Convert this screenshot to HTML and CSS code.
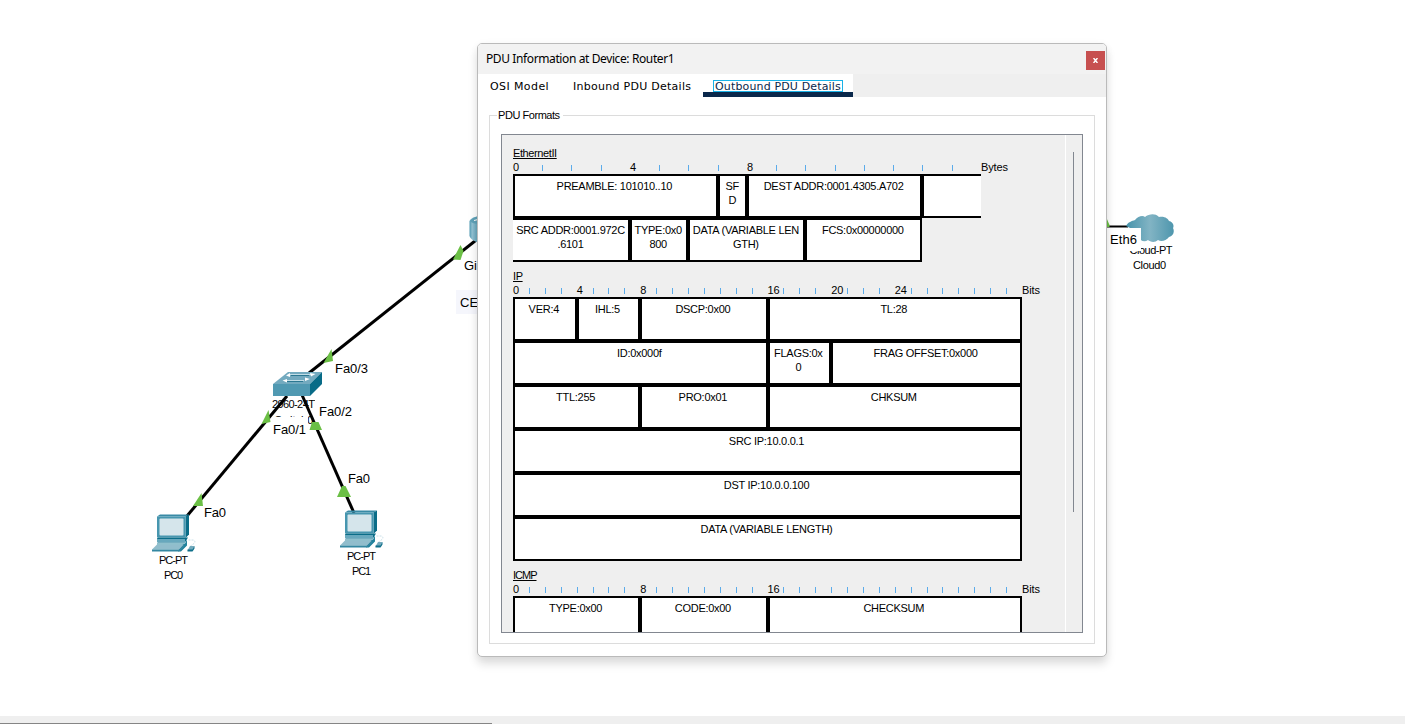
FILE: index.html
```html
<!DOCTYPE html>
<html lang="en">
<head>
<meta charset="utf-8">
<title>PDU Information at Device: Router1</title>
<link rel="stylesheet" href="styles.css">
</head>
<body>
<svg class="topology" width="1405" height="716" viewBox="0 0 1405 716">
  <defs>
    <linearGradient id="cloudFill" x1="0" x2="1" y1="0" y2="0">
      <stop offset="0" stop-color="#4793ab"/><stop offset=".5" stop-color="#82b4c4"/><stop offset="1" stop-color="#4e96ad"/>
    </linearGradient>
    <linearGradient id="routerFill" x1="0" x2="1" y1="0" y2="0">
      <stop offset="0" stop-color="#4d98b1"/><stop offset=".25" stop-color="#94c3d4"/><stop offset="1" stop-color="#4d98b1"/>
    </linearGradient>
    <g id="pc">
      <path fill="#398aa5" d="M0 2 3 0H32L28.500 2Z"/>
      <path fill="#0b6d88" d="M28.500 2 32 0V20L28.500 23.500Z"/>
      <rect fill="#4796af" y="2" width="28.500" height="21"/>
      <rect fill="#d5e5eb" x="2.500" y="4" width="24" height="17" rx="1"/>
      <path fill="#0b6d88" d="M0 24 1 23H31L28 28H1Z"/>
      <rect fill="#67a8bd" y="24.500" width="28" height="3.500"/>
      <path fill="#21829c" d="M0 29H28L30 25V31L24 37H21L26 30H0Z"/>
      <path fill="#91bdcc" d="M0 30H27L21.500 35H-5Z"/>
      <path fill="#3487a1" d="M-5 35H21.500L27 30V32L22 37H-5Z"/>
      <path class="cord" d="M31.500 25.500H36.500Q39 27 37 29L33 32"/>
      <path fill="#73aabd" d="M33 31.500H37.500L36 36H30.500Z"/>
      <path fill="#0f6f8a" d="M30.500 35H35.500L37.500 31.500V34L35.500 37H30.500Z"/>
    </g>
  </defs>

  <g class="labels">
    <text class="device start" x="272" y="408" textLength="49">2960-24TT</text>
    <text class="device" x="294" y="424">Switch0</text>
  </g>
  <path class="mask" d="M315 400H354V420H315Z"/>

  <g class="links">
    <path d="M187 516 287 396"/>
    <path d="M302 395 354 513"/>
    <path d="M309 373 480 237"/>
    <path class="thin" d="M1106 226.500H1128"/>
  </g>
  <path class="mask" d="M273 417H308V438H273Z"/>

  <path fill="url(#routerFill)" d="M469.500 221Q471 217 480 216V243Q471 241 469.500 236Z"/>
  <path fill="#5fa2b8" d="M470 221Q472 217 480 216V224Q472 224 470 221Z"/>
  <path stroke="#fff" d="M474 220.500 478 219.500"/>

  <g class="switch">
    <path fill="#73aabf" d="M288 372H322L310 384H273Z"/>
    <path fill="#5099b2" d="M273 384H310V396H273Z"/>
    <path fill="#086b87" d="M322 372V384L310 396V384Z"/>
    <path stroke="#2c7892" d="M291 375.500H309M286 381.500H303"/>
    <path stroke="#d7eaf0" stroke-width=".8" d="M290 374.500H311M285 380.500H304"/>
    <path fill="#fff" d="M310 373 315.500 374 311 376.500ZM305 377.500 310 379 305 381ZM290 373 286 375.500 290 377ZM287 379 282.500 380.500 287 382.500Z"/>
  </g>

  <use href="#pc" x="157" y="514.500"/>
  <use href="#pc" x="345" y="510.500"/>

  <path fill="url(#cloudFill)" d="M1126 226C1128 222 1132 221 1135 220C1138 216 1143 215 1145 217C1149 214 1155 213 1159 217C1165 216 1168 219 1169 221C1174 222 1174 227 1173 228C1175 232 1173 236 1169 237C1166 241 1161 242 1158 240C1155 243 1150 242 1148 240C1144 243 1140 240 1138 237C1134 236 1132 232 1130 228Z"/>

  <g class="status">
    <path d="M460.500 245 463.500 251 460.500 260 453 259.500Z"/>
    <path d="M331.500 349 333 361 323.500 363Z"/>
    <path d="M268.500 410 270.500 422 261.500 424Z"/>
    <path d="M312 422H318.500L322 430H309.500Z"/>
    <path d="M201.500 493 203 506H193Z"/>
    <path d="M342 486H345.500L351 497H337Z"/>
    <path d="M1104 218H1106.500L1109.500 225V227H1104Z"/>
  </g>

  <g class="labels">
    <text x="335" y="373" textLength="33">Fa0/3</text>
    <text x="319" y="416" textLength="33">Fa0/2</text>
    <text x="273" y="434" textLength="33">Fa0/1</text>
    <text x="204" y="517" textLength="22">Fa0</text>
    <text x="348" y="483" textLength="22">Fa0</text>
    <text x="464" y="270">Gig</text>
    <rect class="note" x="456" y="290" width="24" height="24"/>
    <text x="460" y="307">CE</text>
    <text class="device" x="1151" y="254" textLength="43">Cloud-PT</text>
    <path class="mask" d="M1108 228H1141V251H1108Z"/>
    <text x="1110" y="244" textLength="27">Eth6</text>
    <text class="device" x="1149.500" y="269" textLength="33">Cloud0</text>
    <text class="device" x="173.500" y="564" textLength="29">PC-PT</text>
    <text class="device" x="173.500" y="579" textLength="19">PC0</text>
    <text class="device" x="361.500" y="560" textLength="29">PC-PT</text>
    <text class="device" x="361.500" y="575" textLength="19">PC1</text>
  </g>
</svg>
<div class="statusbar"><div class="statusbar-line"></div></div>

<section class="dialog">
  <header class="titlebar">
    <span class="title">PDU Information at Device: Router1</span>
    <button class="close" aria-label="Close"><svg width="5" height="5" viewBox="0 0 5 5"><path d="M.5 0 4.500 5M4.500 0 .5 5" stroke="#fff" stroke-width="1.500"/></svg></button>
  </header>
  <nav class="tabs">
    <span class="tab tab-osi">OSI Model</span>
    <span class="tab tab-in">Inbound PDU Details</span>
    <span class="tab tab-out"><span class="focus">Outbound PDU Details</span></span>
  </nav>
  <div class="formats">
    <div class="legend">PDU Formats</div>
    <div class="viewport">
      <div class="sheet">
        <h2>EthernetII</h2>
        <div class="scale bytes">
          <b>0</b><i></i><i></i><i></i><b>4</b><i></i><i></i><i></i><b>8</b><i></i><i></i><i></i><i></i><i></i><i></i><i></i><span>Bytes</span>
        </div>
        <div class="packet bytes">
          <div class="s7">PREAMBLE: 101010..10</div><div class="s1">SF<br>D</div><div class="s6">DEST ADDR:0001.4305.A702</div><div class="s2 open-right"></div>
          <div class="s4 open-left">SRC ADDR:0001.972C<br>.6101</div><div class="s2">TYPE:0x0<br>800</div><div class="s4">DATA (VARIABLE LEN<br>GTH)</div><div class="s4">FCS:0x00000000</div>
        </div>

        <h2>IP</h2>
        <div class="scale bits">
          <b>0</b><i></i><i></i><i></i><b>4</b><i></i><i></i><i></i><b>8</b><i></i><i></i><i></i><i></i><i></i><i></i><i></i><b>16</b><i></i><i></i><i></i><b>20</b><i></i><i></i><i></i><b>24</b><i></i><i></i><i></i><i></i><i></i><i></i><i></i><span>Bits</span>
        </div>
        <div class="packet bits">
          <div class="s4">VER:4</div><div class="s4">IHL:5</div><div class="s8">DSCP:0x00</div><div class="s16">TL:28</div>
          <div class="s16">ID:0x000f</div><div class="s4">FLAGS:0x<br>0</div><div class="s12">FRAG OFFSET:0x000</div>
          <div class="s8">TTL:255</div><div class="s8">PRO:0x01</div><div class="s16">CHKSUM</div>
          <div class="s32">SRC IP:10.0.0.1</div>
          <div class="s32">DST IP:10.0.0.100</div>
          <div class="s32">DATA (VARIABLE LENGTH)</div>
        </div>

        <h2 class="narrow">ICMP</h2>
        <div class="scale bits">
          <b>0</b><i></i><i></i><i></i><i></i><i></i><i></i><i></i><b>8</b><i></i><i></i><i></i><i></i><i></i><i></i><i></i><b>16</b><i></i><i></i><i></i><i></i><i></i><i></i><i></i><i></i><i></i><i></i><i></i><i></i><i></i><i></i><i></i><span>Bits</span>
        </div>
        <div class="packet bits">
          <div class="s8">TYPE:0x00</div><div class="s8">CODE:0x00</div><div class="s16">CHECKSUM</div>
        </div>
      </div>
      <div class="scrollbar"><div class="thumb"></div></div>
    </div>
  </div>
</section>
</body>
</html>
```
FILE: styles.css
```css
* { box-sizing: border-box; }
body {
  margin: 0;
  height: 724px;
  overflow: hidden;
  background: #fff;
  color: #000;
  font: 11px/14px "Liberation Sans", Arial, sans-serif;
}

/* Network canvas behind the dialog */
.topology { display: block; }
.links path { stroke: #000; stroke-width: 3; fill: none; }
.links .thin { stroke-width: 2; }
.status path { fill: #6bbf45; }
.cord { fill: none; stroke: #bcd8e2; stroke-width: .8; stroke-dasharray: 2 1; }
.mask { fill: #fff; }
.note { fill: #f5f6fc; }
.labels text { font-size: 13px; }
.labels .device { font-size: 11px; text-anchor: middle; }
.labels .start { text-anchor: start; }
.statusbar { height: 8px; padding-top: 7px; background: #efefef; }
.statusbar-line { width: 492px; height: 1px; background: #858585; }

/* Floating window */
.dialog {
  position: absolute;
  left: 477px;
  top: 43px;
  width: 630px;
  height: 614px;
  display: flex;
  flex-direction: column;
  border: 1px solid #bababa;
  border-radius: 5px;
  background: #fff;
  box-shadow: 0 7px 10px rgba(0, 0, 0, .13), 0 1px 8px rgba(0, 0, 0, .04);
  overflow: hidden;
}
.titlebar {
  flex: none;
  height: 30px;
  display: flex;
  justify-content: space-between;
  padding: 7px 1px 0 8px;
  background: #f2f2f2;
}
.title { font: 12px/16px "Noto Sans", "Open Sans", sans-serif; letter-spacing: -.39px; }
.close {
  display: flex;
  align-items: center;
  justify-content: center;
  width: 19px;
  height: 19px;
  padding: 0;
  border: 0;
  background: #c75050;
}

.tabs {
  flex: none;
  height: 23px;
  display: flex;
  background: #efefef;
  font: 11px/13px "DejaVu Sans", Verdana, sans-serif;
}
.tab { background: #fff; padding-top: 6px; white-space: nowrap; letter-spacing: .27px; }
.tab-osi { width: 84px; padding-left: 12px; letter-spacing: .4px; }
.tab-in { width: 141px; padding-left: 11px; }
.tab-out { width: 150px; padding-left: 10px; border-bottom: 5px solid #0a284b; color: #0a284b; letter-spacing: .15px; }
.focus { display: block; width: 130px; height: 12px; padding-left: 1px; border: 1px solid #19b2e7; line-height: 11px; }

.formats {
  margin: 18px 11px 12px;
  flex: 1;
  min-height: 0;
  border: 1px solid #dcdcdc;
}
.legend {
  width: 66px;
  height: 14px;
  margin: -8px 0 0 7px;
  padding-left: 1px;
  background: #fff;
  letter-spacing: -.45px;
  white-space: nowrap;
}
.viewport {
  display: flex;
  height: 499px;
  margin: 12px 11px 0;
  border: 1px solid #828790;
  background: #efefef;
  overflow: hidden;
}
.sheet { flex: 1; padding: 11px 0 0 11px; }
.sheet h2 {
  margin: 0 0 1px;
  font-size: 11px;
  font-weight: 400;
  line-height: 14px;
  letter-spacing: -.4px;
  text-decoration: underline;
}
.sheet h2.narrow { letter-spacing: -1px; }

/* Rulers and packet fields share one column grid */
.scale, .packet { display: grid; }
.scale { height: 13px; line-height: 13px; }
.bytes { grid-template-columns: repeat(14, 29.240px) 29.300px 29.340px 0; }
.bits { grid-template-columns: repeat(32, 15.920px) 0; }
.scale b { width: 0; font-weight: 400; }
.scale i { height: 6px; margin-top: 4px; border-left: 1px solid #5babea; }
.scale span { white-space: nowrap; letter-spacing: -.1px; }

.packet { grid-auto-rows: 44px; margin-bottom: 7px; }
.packet div {
  min-width: 0;
  padding: 3px 2px 0 0;
  border: 2px solid #000;
  background: #fff;
  text-align: center;
  white-space: nowrap;
  letter-spacing: -.28px;
}
.packet .open-right { border-right: 0; }
.packet .open-left { border-left: 0; padding-right: 0; }
.packet .s1 { padding-right: 0; }
.s1 { grid-column: span 1; }
.s2 { grid-column: span 2; }
.s4 { grid-column: span 4; }
.s6 { grid-column: span 6; }
.s7 { grid-column: span 7; }
.s8 { grid-column: span 8; }
.s12 { grid-column: span 12; }
.s16 { grid-column: span 16; }
.s32 { grid-column: span 32; }

.scrollbar { width: 17px; padding: 17px 0 0 7px; border-left: 1px solid #fff; }
.thumb { width: 1px; height: 360px; background: #828790; }
```
